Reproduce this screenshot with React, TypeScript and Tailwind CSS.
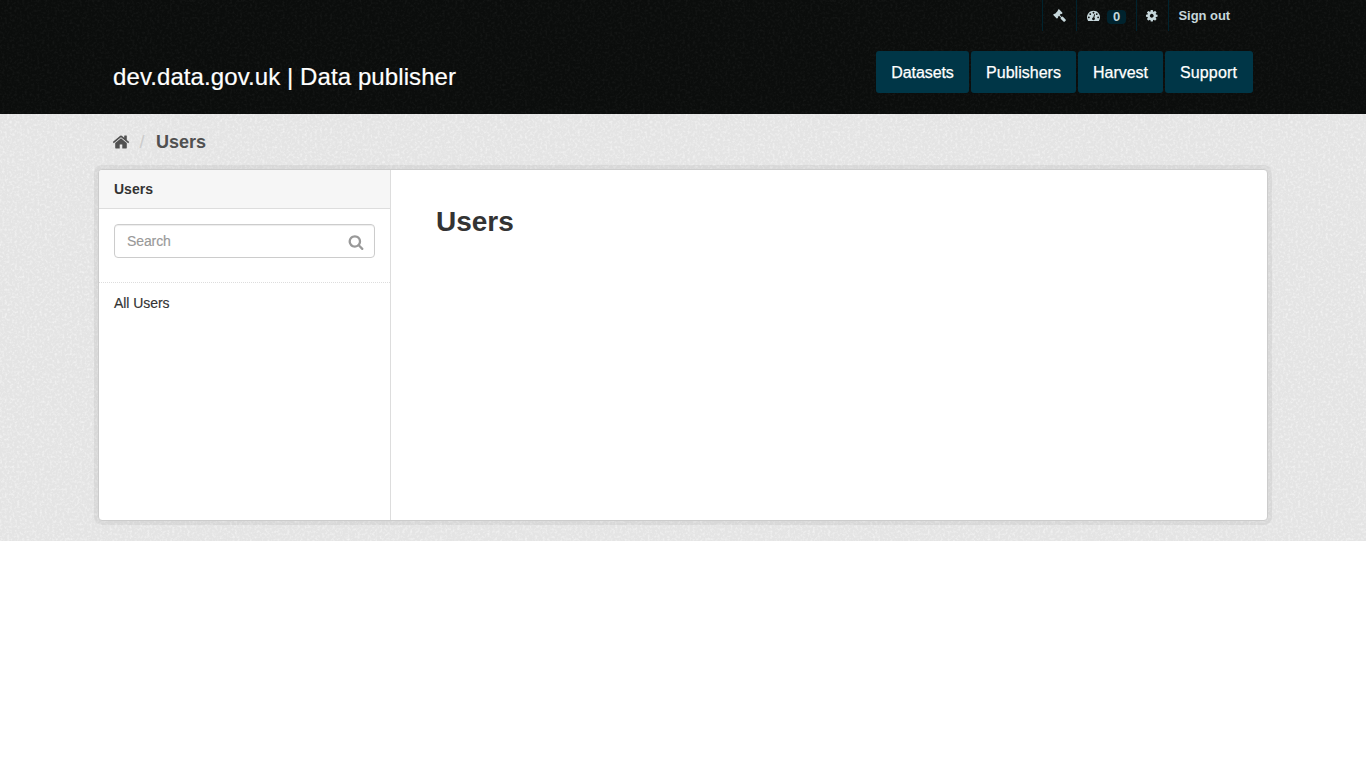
import React from "react";

const paths = {
  search:
    "M1216 832q0-185-131.5-316.5t-316.5-131.5-316.5 131.5-131.5 316.5 131.5 316.5 316.5 131.5 316.5-131.5 131.5-316.5zm512 832q0 52-38 90t-90 38q-54 0-90-38l-343-342q-179 124-399 124-143 0-273.5-55.5t-225-150-150-225-55.5-273.5 55.5-273.5 150-225 225-150 273.5-55.5 273.5 55.5 225 150 150 225 55.5 273.5q0 220-124 399l343 343q37 37 37 90z",
  home:
    "M1472 992v480q0 26-19 45t-45 19h-384v-384h-256v384h-384q-26 0-45-19t-19-45v-480q0-1 .5-3t.5-3l575-474 575 474q1 2 1 6zm223-69l-62 74q-8 9-21 11h-3q-13 0-21-7l-692-577-692 577q-12 8-24 7-13-2-21-11l-62-74q-8-10-7-23.5t11-21.5l719-599q32-26 76-26t76 26l244 204v-195q0-14 9-23t23-9h192q14 0 23 9t9 23v408l219 182q10 8 11 21.5t-7 23.5z",
  cog:
    "M1152 896q0-106-75-181t-181-75-181 75-75 181 75 181 181 75 181-75 75-181zm512-109v222q0 12-8 23t-20 13l-185 28q-19 54-39 91 35 50 107 138 10 12 10 25t-9 23q-27 37-99 108t-94 71q-12 0-26-9l-138-108q-44 23-91 38-16 136-29 186-7 28-36 28h-222q-14 0-24.5-8.5t-11.5-21.5l-28-184q-49-16-90-37l-141 107q-10 9-25 9-14 0-25-11-126-114-165-168-7-10-7-23 0-12 8-23 15-21 51-66.5t54-70.5q-27-50-41-99l-183-27q-13-2-21-12.5t-8-23.5v-222q0-12 8-23t19-13l186-28q14-46 39-92-40-57-107-138-10-12-10-24 0-10 9-23 26-36 98.5-107.5t94.5-71.5q13 0 26 10l138 107q44-23 91-38 16-136 29-186 7-28 36-28h222q14 0 24.5 8.5t11.5 21.5l28 184q49 16 90 37l142-107q9-9 24-9 13 0 25 10 129 119 165 170 7 8 7 22 0 12-8 23-15 21-51 66.5t-54 70.5q26 50 41 98l183 28q13 2 21 12.5t8 23.5z",
  gauge:
    "M384 1152q0-53-37.5-90.5t-90.5-37.5-90.5 37.5-37.5 90.5 37.5 90.5 90.5 37.5 90.5-37.5 37.5-90.5zm192-448q0-53-37.5-90.5t-90.5-37.5-90.5 37.5-37.5 90.5 37.5 90.5 90.5 37.5 90.5-37.5 37.5-90.5zm428 481l101-382q6-26-7.5-48.5t-38.5-29.5-48 6.5-30 39.5l-101 382q-60 5-107 43.5t-63 98.5q-20 77 20 146t117 89 146-20 89-117q16-60-6-117t-72-91zm660-33q0-53-37.5-90.5t-90.5-37.5-90.5 37.5-37.5 90.5 37.5 90.5 90.5 37.5 90.5-37.5 37.5-90.5zm-640-640q0-53-37.5-90.5t-90.5-37.5-90.5 37.5-37.5 90.5 37.5 90.5 90.5 37.5 90.5-37.5 37.5-90.5zm448 192q0-53-37.5-90.5t-90.5-37.5-90.5 37.5-37.5 90.5 37.5 90.5 90.5 37.5 90.5-37.5 37.5-90.5zm320 448q0 261-141 483-19 29-54 29h-1402q-35 0-54-29-141-221-141-483 0-182 71-348t191-286 286-191 348-71 348 71 286 191 191 286 71 348z",
  gavel:
    "M1771 1536q0 53-37 90l-107 108q-39 37-91 37-53 0-90-37l-363-364q-38-36-38-90 0-53 43-96l-256-256-126 126q-14 14-34 14t-34-14q2 2 12.5 12t12.5 13 10 11.5 10 13.5 6 13.5 5.5 16.5 1.5 18q0 38-28 68-3 3-16.5 18t-19 20.5-18.5 16.5-22 15.5-22 9-26 4.5q-40 0-68-28l-408-408q-28-28-28-68 0-13 4.5-26t9-22 15.5-22 16.5-18.5 20.5-19 18-16.5q30-28 68-28 10 0 18 1.5t16.5 5.5 13.5 6 13.5 10 11.5 10 13 12.5 12 12.5q-14-14-14-34t14-34l348-348q14-14 34-14t34 14q-2-2-12.5-12t-12.5-13-10-11.5-10-13.5-6-13.5-5.5-16.5-1.5-18q0-38 28-68 3-3 16.5-18t19-20.5 18.5-16.5 22-15.5 22-9 26-4.5q40 0 68 28l408 408q28 28 28 68 0 13-4.5 26t-9 22-15.5 22-16.5 18.5-20.5 19-18 16.5q-30 28-68 28-10 0-18-1.5t-16.5-5.5-13.5-6-13.5-10-11.5-10-13-12.5-12-12.5q14 14 14 34t-14 34l-126 126 256 256q43-43 96-43 52 0 91 37l363 363q37 39 37 91z",
};

function Icon({ name, className }: { name: keyof typeof paths; className: string }) {
  return (
    <svg viewBox="0 0 1792 1792" fill="currentColor" className={className} aria-hidden="true">
      <path d={paths[name]} />
    </svg>
  );
}

/* Fine paper grain laid over a flat background. */
function Grain({ id, strength }: { id: string; strength: number }) {
  return (
    <svg className="pointer-events-none absolute inset-0 h-full w-full" aria-hidden="true">
      <filter id={id} x="0" y="0" width="100%" height="100%" colorInterpolationFilters="sRGB">
        <feTurbulence type="fractalNoise" baseFrequency="0.4" numOctaves="2" seed="4" stitchTiles="stitch" />
        <feColorMatrix values={`0 0 0 0 1  0 0 0 0 1  0 0 0 0 1  ${strength * 4} 0 0 0 ${-strength * 1.8}`} />
      </filter>
      <rect width="100%" height="100%" filter={`url(#${id})`} />
    </svg>
  );
}

const nav = [
  { label: "Datasets", cls: "w-[93px] tracking-[-0.08px]" },
  { label: "Publishers", cls: "w-[105px] tracking-[0.02px]" },
  { label: "Harvest", cls: "w-[85px] tracking-[0px]" },
  { label: "Support", cls: "w-[88px] pr-px tracking-[0.16px]" },
];

export default function App() {
  return (
    <div className="min-h-screen bg-white font-['Liberation_Sans',Arial,sans-serif] text-sm text-[#333]">
      <header className="relative h-[114px] bg-[#0b0d0c]">
        <Grain id="grain-dark" strength={0.025} />
        <div className="relative mx-auto w-[1170px] px-[15px]">
          <div className="flex h-[31px] justify-end pr-[13px] text-[13px] font-bold text-[#c6d7db]">
            <a className="flex w-[34px] justify-center border-l border-[#00232e] pt-[9px]">
              <Icon name="gavel" className="size-[13px]" />
            </a>
            <a className="flex w-[60px] border-l border-[#00232e] pt-[9px] pl-[10px]">
              <Icon name="gauge" className="size-[13px]" />
              <span className="ml-[7px] mt-px h-[14px] w-[19px] rounded-[4px] bg-[#00232e] text-center text-[13px] leading-[13px]">0</span>
            </a>
            <a className="flex w-[32px] justify-center border-l border-[#00232e] pt-[9px]">
              <Icon name="cog" className="-ml-[1.5px] size-[13.5px]" />
            </a>
            <a className="w-[72px] border-l border-[#00232e] pl-[9.5px] leading-[31px] tracking-[-0.05px] whitespace-nowrap">Sign out</a>
          </div>
          <div className="flex items-start justify-between pt-5">
            <h1 className="pt-[8px] text-[24px] leading-9 tracking-[0.09px] text-white [-webkit-text-stroke:0.2px_white]">dev.data.gov.uk | Data publisher</h1>
            <nav className="flex gap-[2px]">
              {nav.map((n) => (
                <a key={n.label} className={`h-[42px] rounded-[3px] bg-[#003647] text-center text-base leading-[43px] text-white [-webkit-text-stroke:0.25px_white] ${n.cls}`}>
                  {n.label}
                </a>
              ))}
            </nav>
          </div>
        </div>
      </header>
      <main className="relative h-[427px] bg-[#e4e4e4]">
        <Grain id="grain-light" strength={0.3} />
        <div className="relative mx-auto w-[1170px]">
          <div className="flex h-[55px] items-center pl-[14px] text-[#505050]">
            <Icon name="home" className="size-[18px]" />
            <span className="ml-[9.5px] text-lg text-[#ccc]">/</span>
            <strong className="ml-[11.5px] text-lg">Users</strong>
          </div>
          <div className="flex h-[352px] overflow-hidden rounded-[4px] border border-[#ccc] bg-white shadow-[0_0_0_4px_rgba(0,0,0,0.05)]">
            <aside className="w-[292px] border-r border-[#ddd]">
              <h2 className="h-[39px] border-b border-[#ddd] bg-[#f6f6f6] pl-[15px] text-sm leading-[38px] font-bold">Users</h2>
              <div className="h-[74px] border-b border-dotted border-[#ddd] px-[15px] pt-[15px]">
                <div className="flex h-[34px] items-center justify-between rounded-[4px] border border-[#ccc] pr-[10px] pl-3 text-[#999] shadow-[inset_0_1px_1px_rgba(0,0,0,0.075)]">
                  <span className="tracking-[-0.1px] [-webkit-text-stroke:0.15px_#999]">Search</span>
                  <Icon name="search" className="mt-px size-[16px]" />
                </div>
              </div>
              <a className="block pl-[15px] leading-[40px] tracking-[-0.05px] [-webkit-text-stroke:0.15px_#333]">All Users</a>
            </aside>
            <section className="pt-[31px] pl-[45px]">
              <h1 className="text-[28px] leading-[42px] font-bold">Users</h1>
            </section>
          </div>
        </div>
      </main>
    </div>
  );
}
